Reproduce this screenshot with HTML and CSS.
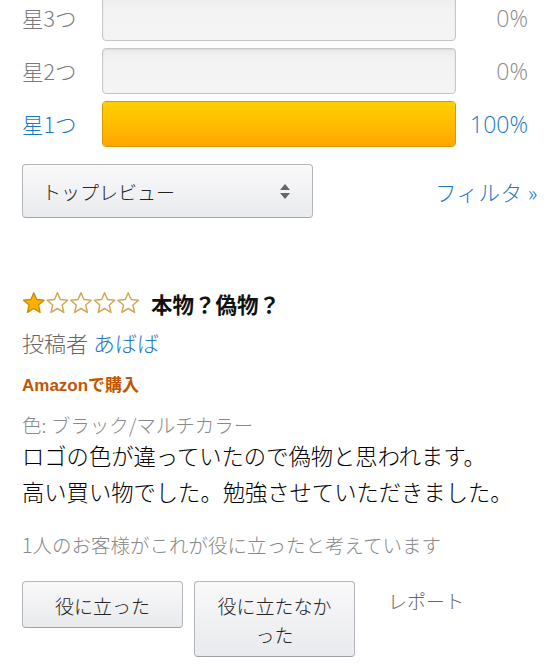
FILE: index.html
```html
<!DOCTYPE html>
<html lang="ja">
<head>
<meta charset="utf-8">
<link rel="stylesheet" href="styles.css">
</head>
<body>
<div class="page">
  <div class="hist">
    <div class="hist-row">
      <span class="hist-label">星3つ</span>
      <div class="bar"></div>
      <span class="hist-pct">0%</span>
    </div>
    <div class="hist-row">
      <span class="hist-label">星2つ</span>
      <div class="bar"></div>
      <span class="hist-pct">0%</span>
    </div>
    <div class="hist-row active">
      <span class="hist-label">星1つ</span>
      <div class="bar"><div class="bar-fill" style="width:100%"></div></div>
      <span class="hist-pct">100%</span>
    </div>
  </div>

  <div class="sort-row">
    <div class="select">
      <span class="select-text">トップレビュー</span>
      <span class="select-arrows"><span class="arr-up"></span><span class="arr-down"></span></span>
    </div>
    <a class="filter">フィルタ »</a>
  </div>

  <div class="review">
    <div class="review-head">
      <svg class="stars" width="118" height="23" viewBox="0 0 118 23">
        <defs>
          <polygon id="st" points="11.8,0.8 14.74,7.45 22.07,8.26 16.56,13.05 18.15,20.34 11.8,16.5 5.45,20.34 7.04,13.05 1.53,8.26 8.86,7.45"/>
        </defs>
        <use href="#st" x="0" fill="#ffb000" stroke="#c98b00" stroke-width="1.3" stroke-linejoin="round"/>
        <use href="#st" x="23.6" fill="#fff" stroke="#d0a757" stroke-width="1.5" stroke-linejoin="round"/>
        <use href="#st" x="47.2" fill="#fff" stroke="#d0a757" stroke-width="1.5" stroke-linejoin="round"/>
        <use href="#st" x="70.8" fill="#fff" stroke="#d0a757" stroke-width="1.5" stroke-linejoin="round"/>
        <use href="#st" x="94.4" fill="#fff" stroke="#d0a757" stroke-width="1.5" stroke-linejoin="round"/>
      </svg>
      <span class="review-title">本物？偽物？</span>
    </div>
    <div class="byline">投稿者 <a class="author">あばば</a></div>
    <div class="verified">Amazonで購入</div>
    <div class="variant">色: ブラック/マルチカラー</div>
    <p class="body">ロゴの色が違っていたので偽物と思われます。<br>高い買い物でした。勉強させていただきました。</p>
    <div class="helpful">1人のお客様がこれが役に立ったと考えています</div>
    <div class="actions">
      <button class="btn">役に立った</button>
      <button class="btn">役に立たなかった</button>
      <span class="report">レポート</span>
    </div>
  </div>
</div>
</body>
</html>
```

FILE: styles.css
```css
html, body {
  margin: 0;
  padding: 0;
  background: #fff;
}
body {
  font-family: "Noto Sans CJK JP", "Noto Sans", sans-serif;
  font-weight: 300;
  color: #111;
  overflow: hidden;
}
.page {
  padding: 0 22px;
}
.hist {
  margin-top: -5px;
  display: flex;
  flex-direction: column;
  gap: 7px;
}
.hist-row {
  display: grid;
  grid-template-columns: 80px 354px 1fr;
  align-items: center;
  height: 46px;
}
.hist-label {
  font-size: 21.5px;
  color: #7a7a7a;
  line-height: 1;
}
.hist-pct {
  font-family: "Open Sans", "Noto Sans", sans-serif;
  font-weight: 300;
  font-size: 23px;
  color: #8c8c8c;
  text-align: right;
  padding-right: 10px;
  line-height: 1;
}
.hist-row.active .hist-label,
.hist-row.active .hist-pct {
  color: #1e78c8;
}
.bar {
  height: 46px;
  box-sizing: border-box;
  border: 1px solid #c6c6c6;
  border-radius: 4px;
  background: linear-gradient(#ececec, #f3f3f3 30%, #f4f4f4);
  box-shadow: inset 0 1px 2px rgba(0,0,0,0.08);
  overflow: hidden;
  position: relative;
}
.hist-row.active .bar {
  border-color: #d99a00;
}
.bar-fill {
  height: 100%;
  background: linear-gradient(#ffcf00, #ffbd00 50%, #ffa500);
}
.sort-row {
  margin-top: 17px;
  display: flex;
  justify-content: space-between;
  align-items: center;
}
.select {
  width: 291px;
  height: 54px;
  box-sizing: border-box;
  border: 1px solid #b3b6bb;
  border-bottom-color: #a2a6ab;
  border-radius: 4px;
  background: linear-gradient(#f9f9fa, #eaebee);
  display: flex;
  align-items: center;
  justify-content: space-between;
  padding: 0 22px 0 19px;
}
.select-text {
  font-size: 19px;
  color: #222;
}
.select-arrows {
  display: flex;
  flex-direction: column;
  gap: 3px;
  align-items: center;
}
.arr-up, .arr-down {
  width: 0;
  height: 0;
  border-left: 5px solid transparent;
  border-right: 5px solid transparent;
}
.arr-up { border-bottom: 6px solid #666; }
.arr-down { border-top: 6px solid #666; }
.filter {
  font-size: 21.5px;
  letter-spacing: 0.5px;
  color: #1e78c8;
}
.review {
  margin-top: 70px;
}
.review-head {
  display: flex;
  align-items: center;
  gap: 11px;
  height: 30px;
}
.stars {
  display: block;
}
.review-title {
  font-size: 21.5px;
  font-weight: 700;
  color: #111;
}
.byline {
  margin-top: 9px;
  font-size: 22px;
  line-height: 30px;
  color: #666;
}
.author {
  color: #1e78c8;
}
.verified {
  margin-top: 18px;
  font-family: "Liberation Sans", "Noto Sans CJK JP", sans-serif;
  font-size: 17px;
  line-height: 22px;
  font-weight: 700;
  color: #c45500;
}
.variant {
  margin-top: 16px;
  font-size: 19.5px;
  line-height: 24px;
  color: #8a8a8a;
}
.body {
  margin: 0;
  font-size: 22.3px;
  line-height: 36px;
  color: #000;
}
.helpful {
  margin-top: 23px;
  font-size: 19.5px;
  line-height: 26px;
  color: #888;
}
.actions {
  margin-top: 23px;
  display: flex;
  align-items: flex-start;
  gap: 11px;
}
.btn {
  width: 161px;
  box-sizing: border-box;
  padding: 9px 20px 7px;
  font-family: inherit;
  font-weight: 300;
  font-size: 19px;
  line-height: 29px;
  color: #222;
  border: 1px solid #b3b6bb;
  border-bottom-color: #9ea2a8;
  border-radius: 4px;
  background: linear-gradient(#f9f9fa, #e9eaed);
  text-align: center;
}
.report {
  margin-left: 22px;
  padding-top: 5px;
  font-size: 19px;
  line-height: 29px;
  color: #666;
}
```
